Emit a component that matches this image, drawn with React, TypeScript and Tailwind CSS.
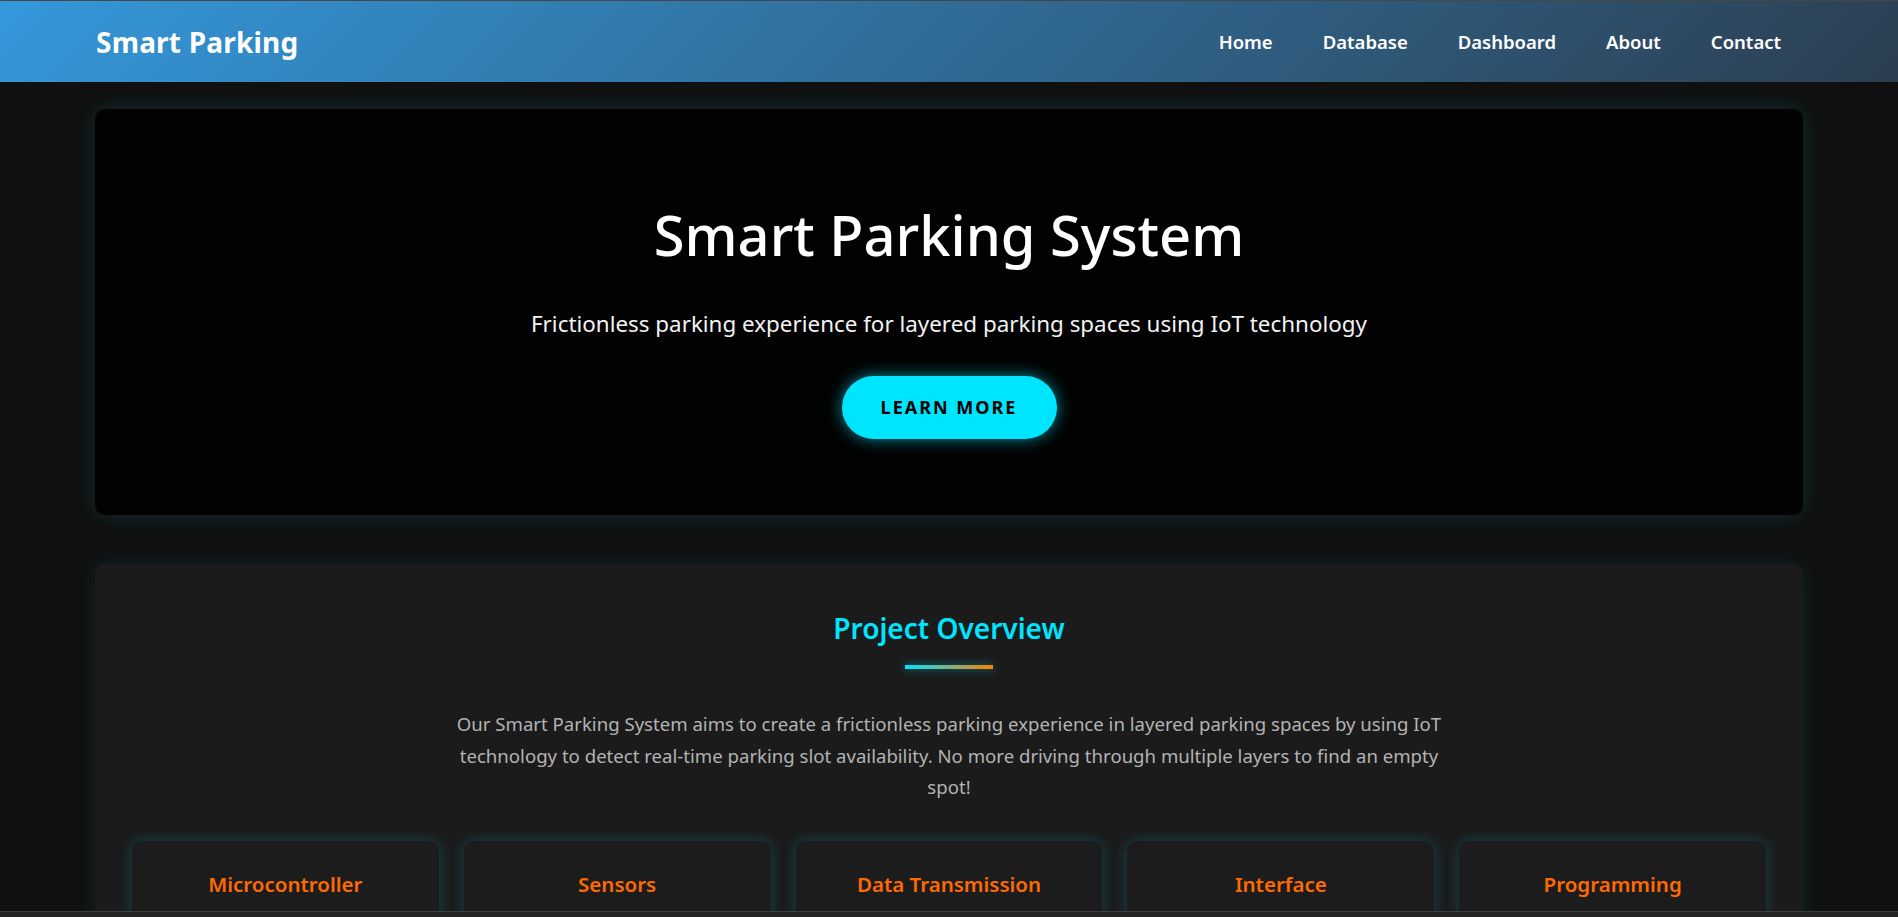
const NAV = ["Home", "Database", "Dashboard", "About", "Contact"];
const FEATURES = ["Microcontroller", "Sensors", "Data Transmission", "Interface", "Programming"];

export default function App() {
  return (
    <div className="min-h-screen bg-[#101010] font-['Segoe_UI','Noto_Sans',sans-serif] text-white">
      {/* Nav */}
      <header className="h-[82px] border-t border-[#474747] bg-[linear-gradient(135deg,#3498db,#2c3e50)] flex items-center justify-between pl-[96px] pr-[117px]">
        <span className="text-[28px] font-bold tracking-[0.2px]">Smart Parking</span>
        <nav className="flex items-center gap-[50px]">
          {NAV.map(n => (
            <a key={n} className="text-[18.5px] font-semibold text-white">{n}</a>
          ))}
        </nav>
      </header>

      <main className="w-[90%] mx-auto">
        {/* Hero */}
        <section className="mt-[27px] rounded-[10px] bg-[#020202] shadow-[0_0_22px_rgba(0,229,255,0.13)] pt-[90px] pb-[76px] flex flex-col items-center text-center">
          <h1 className="text-[56px] leading-[70px] font-medium">Smart Parking System</h1>
          <p className="mt-[38px] text-[22.4px] leading-[34px] text-[#f2f2f2]">Frictionless parking experience for layered parking spaces using IoT technology</p>
          <button className="mt-[35px] w-[215px] h-[63px] rounded-full bg-[#00e5ff] text-black text-[18px] font-bold tracking-[2px] shadow-[0_0_16px_rgba(0,229,255,0.6)]">
            LEARN MORE
          </button>
        </section>

        {/* Overview */}
        <section className="mt-[49px] rounded-[10px] bg-[#1b1b1b] shadow-[0_0_22px_rgba(0,229,255,0.1)] pt-[46px] px-[37px] pb-10 flex flex-col items-center">
          <h2 className="text-[28px] leading-[36px] font-semibold text-[#00e5ff]">Project Overview</h2>
          <div className="mt-[19px] w-[88px] h-[4px] bg-[linear-gradient(90deg,#00e5ff,#ff7f00)] shadow-[0_0_8px_rgba(0,229,255,0.5)]" />
          <p className="mt-[39px] max-w-[1000px] text-center text-[18.6px] leading-[31.6px] text-[#b3b3b3]">
            Our Smart Parking System aims to create a frictionless parking experience in layered parking spaces by using IoT technology to detect real-time parking slot availability. No more driving through multiple layers to find an empty spot!
          </p>
          <div className="mt-[38px] w-full grid grid-cols-5 gap-[25px]">
            {FEATURES.map(f => (
              <div key={f} className="h-[200px] rounded-[10px] bg-[#1c1c1c] shadow-[0_0_14px_rgba(0,229,255,0.22)] pt-[29px] text-center">
                <h3 className="text-[20.5px] leading-[28px] font-semibold text-[#ff6a00]">{f}</h3>
              </div>
            ))}
          </div>
        </section>
      </main>

      {/* bottom scrollbar track */}
      <div className="fixed left-0 right-0 bottom-0 h-[6px] bg-[#242424] border-t border-[#3d3d3d]" />
    </div>
  );
}
